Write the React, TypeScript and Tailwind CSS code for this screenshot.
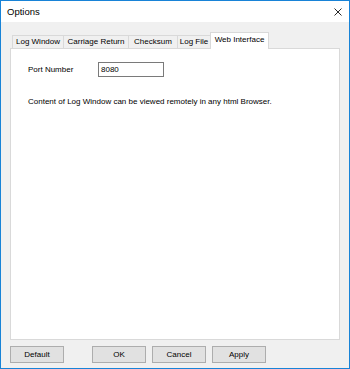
const tabs = [
  { label: "Log Window", w: "w-[52px]" },
  { label: "Carriage Return", w: "w-[66px]" },
  { label: "Checksum", w: "w-[50px]" },
  { label: "Log File", w: "w-[34px]" },
];

const Button = ({ label }: { label: string }) => (
  <button className="w-[54px] h-[17px] border border-[#adadad] bg-[#e1e1e1] text-[8px] leading-none text-black">
    {label}
  </button>
);

export default function App() {
  return (
    <div
      className="w-[350px] h-[369px] border border-[#1883d7] flex flex-col bg-[#f0f0f0] text-black"
      style={{ fontFamily: '"Liberation Sans", Arial, sans-serif' }}
    >
      {/* Title bar */}
      <div className="h-[21px] bg-white flex items-center justify-between pl-[6px] pr-[6px]">
        <span className="text-[9.5px] leading-none">Options</span>
        <svg width="8" height="8" viewBox="0 0 8 8" className="mr-px">
          <path d="M0.5 0.5 L7.5 7.5 M7.5 0.5 L0.5 7.5" stroke="#111" strokeWidth="0.9" />
        </svg>
      </div>

      {/* Body */}
      <div className="flex-1 flex flex-col pl-[9px] pr-[9px] pt-[10px]">
        {/* Tab strip */}
        <div className="h-[17px] -mb-px flex items-end pl-[2px] relative z-10">
          {tabs.map((t, i) => (
            <div
              key={t.label}
              className={`${t.w} h-[13px] mb-px border border-b-0 border-[#d9d9d9] bg-[#f0f0f0] flex items-center justify-center text-[8px] leading-none ${
                i > 0 ? "-ml-px" : ""
              }`}
            >
              {t.label}
            </div>
          ))}
          <div className="w-[59px] h-[17px] -ml-px border border-b-0 border-[#d9d9d9] bg-white flex items-start justify-center pt-[3px] text-[8px] leading-none">
            Web Interface
          </div>
        </div>

        {/* Tab panel */}
        <div className="h-[292px] border border-[#d9d9d9] bg-white pl-[17px] pt-[13px]">
          <div className="flex items-center">
            <span className="w-[70px] text-[8px] leading-none">Port Number</span>
            <div className="w-[66px] h-[15px] border border-[#7a7a7a] flex items-center pl-[2px] text-[8px] leading-none">
              8080
            </div>
          </div>
          <p className="mt-[21px] text-[8px] leading-none">
            Content of Log Window can be viewed remotely in any html Browser.
          </p>
        </div>

        {/* Buttons */}
        <div className="mt-[6px] flex">
          <Button label="Default" />
          <div className="ml-[28px] flex gap-[6px]">
            <Button label="OK" />
            <Button label="Cancel" />
            <Button label="Apply" />
          </div>
        </div>
      </div>
    </div>
  );
}
